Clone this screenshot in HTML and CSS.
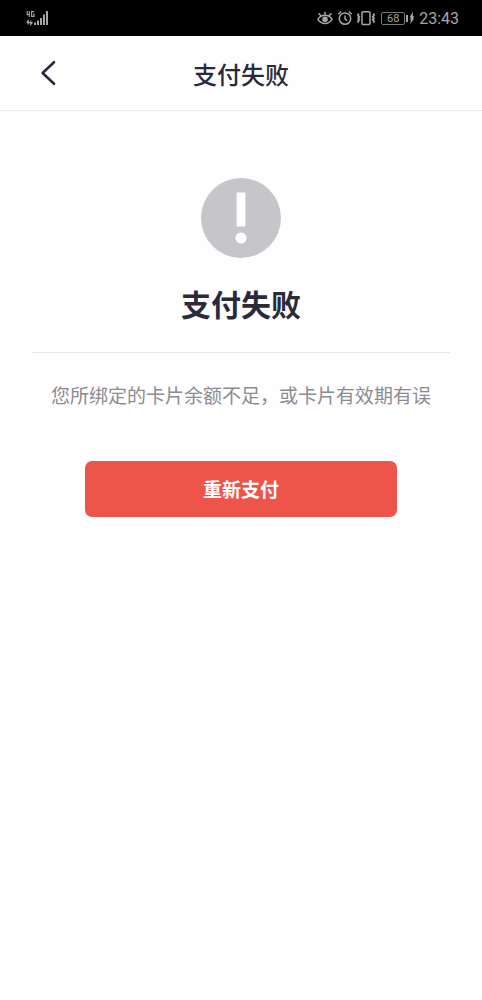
FILE: index.html
```html
<!DOCTYPE html>
<html lang="zh-CN">
<head>
<meta charset="utf-8">
<meta name="viewport" content="width=device-width, initial-scale=1">
<title>支付失败</title>
<link rel="stylesheet" href="styles.css">
</head>
<body>
<div class="status-bar">
  <svg width="24" height="16" viewBox="0 0 24 16" role="img" aria-label="4G">
    <g fill="none" stroke="currentColor" stroke-width="1.1">
      <path d="M1.2 1v3.6h2.6M3.3 1v6M8 1.6H5.6v4.8H8V4.2H7"/>
      <path d="M2.2 14.5v-4l-1.4 1.6M4.8 10.5v4l1.4-1.6M.8 12.6h5.8"/>
    </g>
    <path fill="currentColor" d="M8 12.6h2V15H8zM11 10.5h2V15h-2zM14 8h2v7h-2zM17 4.5h2V15h-2zM20 1h2v14h-2z"/>
  </svg>
  <div class="status-right">
    <svg width="16" height="16" viewBox="0 0 16 16" fill="none" stroke="currentColor" stroke-width="1.5" aria-hidden="true">
      <path d="M.9 9.3C2.6 6.6 5.1 5.2 8 5.2s5.4 1.4 7.1 4.1c-1.7 2.7-4.2 4.1-7.1 4.1S2.6 12 .9 9.3zM8 5V1.8M4 5.8 1.6 3.4M12 5.8l2.4-2.4"/>
      <circle cx="8" cy="9.2" r="2.8" fill="currentColor" stroke="none"/>
    </svg>
    <svg width="16" height="16" viewBox="0 0 16 16" fill="none" stroke="currentColor" stroke-width="1.5" aria-hidden="true">
      <circle cx="8" cy="8.6" r="5.7"/>
      <path d="M8 5.4v3.4l2.2 2M1.2 4.2l3-2.7M14.8 4.2l-3-2.7"/>
    </svg>
    <svg width="18" height="16" viewBox="0 0 18 16" fill="none" stroke="currentColor" stroke-width="1.5" aria-hidden="true">
      <rect x="5" y="1.7" width="8" height="12.8" rx="1"/>
      <path d="M1.2 3.4v2.2l1 1.2-1 1.4 1 1.4-1 1.2v2M16.8 3.4v2.2l-1 1.2 1 1.4-1 1.4 1 1.2v2" stroke-width="1.9"/>
    </svg>
    <span class="battery">68</span>
    <svg width="6" height="14" viewBox="0 0 6 14" fill="currentColor" aria-hidden="true">
      <path d="M3.9.8.6 6.2l1.8.8L.4 8.2l1.6.6-.8 4.4L5 7.8 3.8 7l1.8-1.2L3.8 5z"/>
    </svg>
    <time>23:43</time>
  </div>
</div>
<header class="nav">
  <button class="back" type="button" aria-label="返回">
    <svg width="16" height="26" viewBox="0 0 16 26" fill="none" stroke="currentColor" stroke-width="2.6" stroke-linecap="round" stroke-linejoin="round" aria-hidden="true">
      <path d="M14 2.2 2.6 13 14 23.8"/>
    </svg>
  </button>
  <h1 class="nav-title">支付失败</h1>
</header>
<main class="result">
  <svg width="80" height="80" viewBox="0 0 80 80" aria-hidden="true">
    <circle cx="40" cy="40" r="40" fill="#c6c5ca"/>
    <path d="M35.6 14.5h8.8v34h-8.8z" fill="#fff"/>
    <circle cx="40" cy="60" r="5.6" fill="#fff"/>
  </svg>
  <h2 class="result-title">支付失败</h2>
  <p class="message">您所绑定的卡片余额不足，或卡片有效期有误</p>
  <button class="retry" type="button">重新支付</button>
</main>
</body>
</html>
```
FILE: styles.css
```css
* {
  box-sizing: border-box;
}

body {
  margin: 0;
  background: #fefefe;
  color: #2b2a3a;
  font-family: "Noto Sans CJK SC", sans-serif;
}

button {
  border: 0;
  font-family: inherit;
  cursor: pointer;
}

svg {
  display: block;
}

.status-bar {
  display: flex;
  align-items: center;
  justify-content: space-between;
  height: 36px;
  padding: 0 23px 0 26px;
  background: #000;
  color: #a6a6a6;
  font-family: Roboto, sans-serif;
  font-size: 16px;
}

.status-right {
  display: flex;
  align-items: center;
  gap: 4px;
}

.battery {
  position: relative;
  width: 24px;
  margin: 0 0 0 2px;
  border: 1px solid #777;
  border-radius: 2px;
  font-size: 11px;
  line-height: 11px;
  text-align: center;
}

.battery::after {
  content: "";
  position: absolute;
  top: 2px;
  right: -4px;
  width: 2px;
  height: 7px;
  background: #a6a6a6;
}

.nav {
  display: grid;
  grid-template-columns: 56px 1fr 56px;
  align-items: center;
  height: 75px;
  border-bottom: 1px solid #ebebeb;
}

.back {
  justify-self: end;
  padding: 0;
  background: none;
  color: #2b2a3a;
}

.nav-title {
  margin: 0;
  padding-top: 2px;
  font-size: 24px;
  font-weight: 500;
  line-height: 36px;
  text-align: center;
}

.result {
  display: flex;
  flex-direction: column;
  align-items: center;
  padding: 67px 32px 32px;
}

.result-title {
  align-self: stretch;
  margin: 0;
  padding: 23px 0 27px;
  border-bottom: 1px solid #e6e6e6;
  font-size: 30px;
  font-weight: 700;
  line-height: 44px;
  text-align: center;
}

.message {
  margin: 28px 0 52px;
  color: #8c8b92;
  font-size: 19px;
  font-weight: 400;
  line-height: 28px;
  text-align: center;
}

.retry {
  align-self: stretch;
  height: 56px;
  margin: 0 53px;
  padding: 0 0 2px;
  border-radius: 7px;
  background: #ed544a;
  color: #fff;
  font-size: 19px;
  font-weight: 700;
}
```
